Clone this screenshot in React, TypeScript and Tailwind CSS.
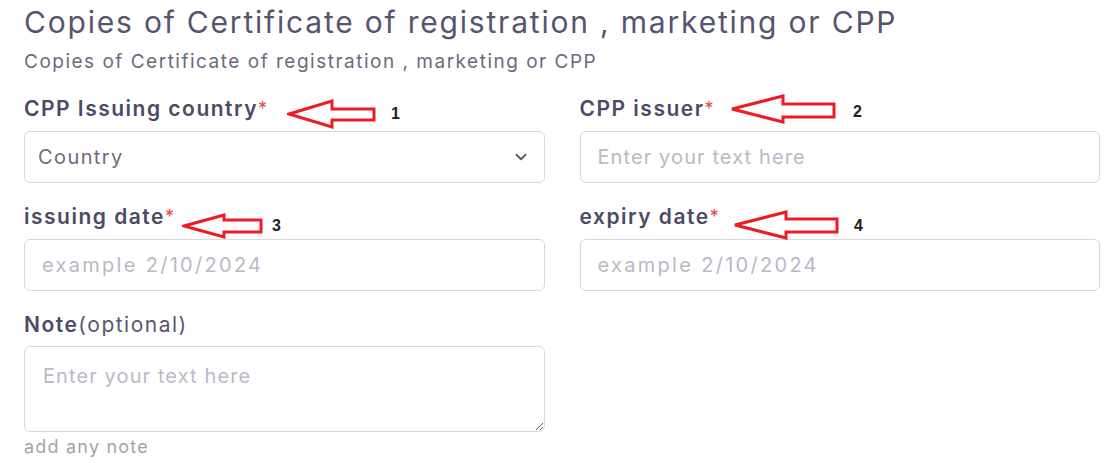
import { ChevronDown } from "lucide-react";

const text = {
  title: "Copies of Certificate of registration , marketing or CPP",
  subtitle: "Copies of Certificate of registration , marketing or CPP",
  country: "CPP Issuing country",
  issuer: "CPP issuer",
  issuingDate: "issuing date",
  expiryDate: "expiry date",
  placeholder: "Enter your text here",
  datePlaceholder: "example 2/10/2024",
};

const font = { fontFamily: "Inter, 'Noto Sans', sans-serif" };

const Label = ({ children, required }: { children: React.ReactNode; required?: boolean }) => (
  <label className="block text-[21px] leading-[24px] font-semibold text-[#4d4a65] tracking-[1.5px]">
    {children}
    {required && <span className="text-[#ef4444] font-normal text-[18px] tracking-normal align-top">*</span>}
  </label>
);

const TextInput = ({ placeholder, wide }: { placeholder: string; wide?: boolean }) => (
  <input
    className={
      wide
        ? "mt-[10px] block h-[52px] w-full rounded-[6px] border border-[#d9d8e0] bg-white px-[17px] text-[20px] tracking-[2.3px] text-[#4d4a65] outline-none placeholder:text-[#bab9c4]"
        : "mt-[10px] block h-[52px] w-full rounded-[6px] border border-[#d9d8e0] bg-white px-[17px] text-[20px] tracking-[1.1px] text-[#4d4a65] outline-none placeholder:text-[#bab9c4]"
    }
    placeholder={placeholder}
  />
);

// red annotation arrow pointing left, drawn over the page
const Arrow = ({
  left,
  top,
  w,
  h,
  head,
  shaftTop,
  shaftBottom,
  label,
  labelLeft,
  labelTop,
}: {
  left: number;
  top: number;
  w: number;
  h: number;
  head: number;
  shaftTop: number;
  shaftBottom: number;
  label: string;
  labelLeft: number;
  labelTop: number;
}) => (
  <>
    <svg
      className="absolute"
      style={{ left, top }}
      width={w + 4}
      height={h + 4}
      viewBox={`-2 -2 ${w + 4} ${h + 4}`}
    >
      <polygon
        points={`0,${h / 2} ${head},0 ${head},${shaftTop} ${w},${shaftTop} ${w},${shaftBottom} ${head},${shaftBottom} ${head},${h}`}
        fill="none"
        stroke="#ed1c24"
        strokeWidth={3}
        strokeLinejoin="miter"
      />
    </svg>
    <span
      className="absolute text-[16px] leading-none font-bold text-[#222]"
      style={{ left: labelLeft, top: labelTop, fontFamily: "'Liberation Sans', Arial, sans-serif" }}
    >
      {label}
    </span>
  </>
);

export default function App() {
  return (
    <div className="relative min-h-[463px] w-[1116px] bg-white pl-[24px] pr-[16px] pt-[4px]" style={font}>
      <h1 className="text-[30px] leading-[36px] font-normal text-[#56546e] tracking-[1.8px]">{text.title}</h1>
      <p className="mt-[10px] text-[19px] leading-[24px] text-[#6c6a7c] tracking-[1.5px]">{text.subtitle}</p>

      <div className="mt-[23px] grid grid-cols-2 gap-x-[35px] gap-y-[22px]">
        <div>
          <Label required>{text.country}</Label>
          <div className="mt-[10px] flex h-[52px] w-full items-center justify-between rounded-[6px] border border-[#d9d8e0] bg-white pl-[13px] pr-[14px]">
            <span className="text-[20px] tracking-[1.4px] text-[#6e6b7e]">Country</span>
            <ChevronDown className="h-[18px] w-[18px] text-[#5d5b6e]" strokeWidth={2.5} />
          </div>
        </div>
        <div>
          <Label required>{text.issuer}</Label>
          <TextInput placeholder={text.placeholder} />
        </div>
        <div>
          <Label required>{text.issuingDate}</Label>
          <TextInput placeholder={text.datePlaceholder} wide />
        </div>
        <div>
          <Label required>{text.expiryDate}</Label>
          <TextInput placeholder={text.datePlaceholder} wide />
        </div>
        <div>
          <label className="block text-[21px] leading-[24px] text-[#4d4a65] tracking-[1.5px]">
            <span className="font-semibold">Note</span>
            <span className="text-[#5a586f]">(optional)</span>
          </label>
          <textarea
            className="mt-[9px] block h-[86px] w-full rounded-[6px] border border-[#d9d8e0] bg-white px-[18px] py-[14px] text-[20px] tracking-[1.1px] text-[#4d4a65] outline-none placeholder:text-[#bab9c4]"
            placeholder={text.placeholder}
          />
          <p className="mt-[4px] text-[18px] leading-[22px] tracking-[1.2px] text-[#a3a2ae]">add any note</p>
        </div>
      </div>

      <Arrow left={287} top={99} w={85} h={26} head={43} shaftTop={8} shaftBottom={19} label="1" labelLeft={391} labelTop={106} />
      <Arrow left={730} top={94} w={102} h={26} head={51} shaftTop={8} shaftBottom={21} label="2" labelLeft={853} labelTop={104} />
      <Arrow left={182} top={213} w={77} h={22} head={40} shaftTop={5} shaftBottom={17} label="3" labelLeft={272} labelTop={218} />
      <Arrow left={733} top={210} w={102} h={26} head={51} shaftTop={7} shaftBottom={20} label="4" labelLeft={854} labelTop={218} />
    </div>
  );
}
